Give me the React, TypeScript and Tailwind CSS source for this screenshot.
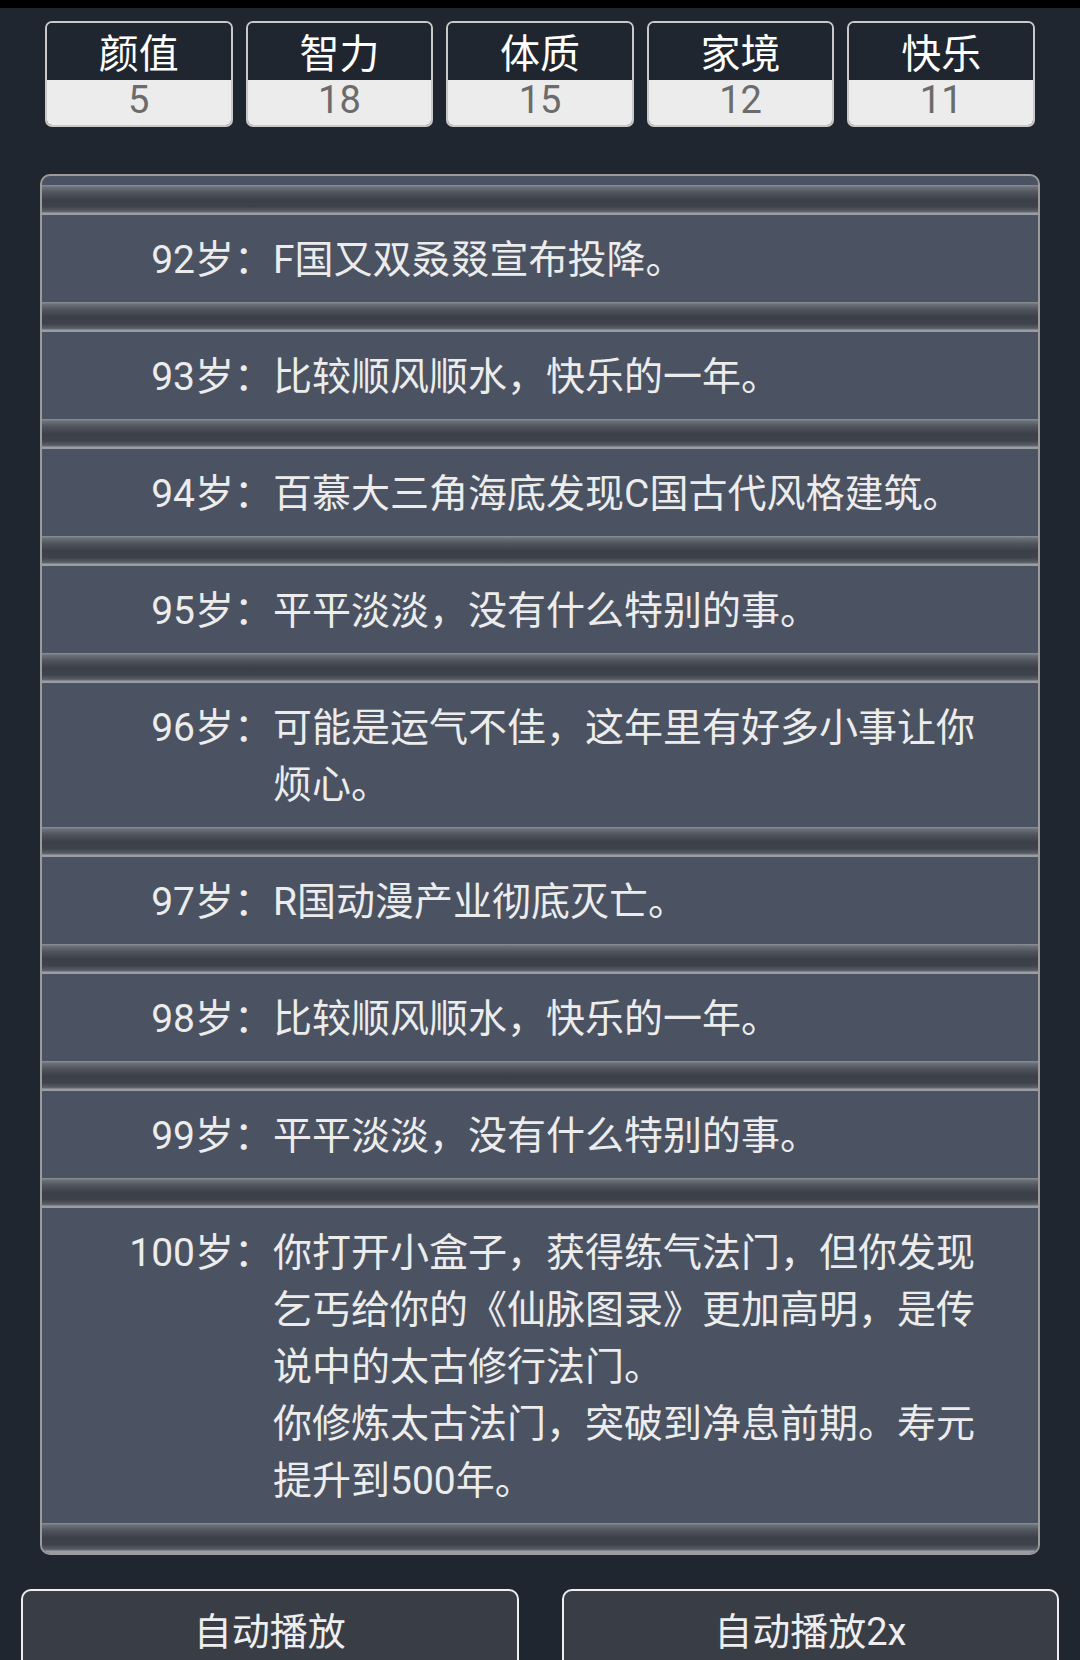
import React from "react";

const stats = [
  { label: "颜值", value: "5" },
  { label: "智力", value: "18" },
  { label: "体质", value: "15" },
  { label: "家境", value: "12" },
  { label: "快乐", value: "11" },
];

const rows: { age: string; lines: string[] }[] = [
  { age: "92岁：", lines: ["F国又双叒叕宣布投降。"] },
  { age: "93岁：", lines: ["比较顺风顺水，快乐的一年。"] },
  { age: "94岁：", lines: ["百慕大三角海底发现C国古代风格建筑。"] },
  { age: "95岁：", lines: ["平平淡淡，没有什么特别的事。"] },
  { age: "96岁：", lines: ["可能是运气不佳，这年里有好多小事让你烦心。"] },
  { age: "97岁：", lines: ["R国动漫产业彻底灭亡。"] },
  { age: "98岁：", lines: ["比较顺风顺水，快乐的一年。"] },
  { age: "99岁：", lines: ["平平淡淡，没有什么特别的事。"] },
  {
    age: "100岁：",
    lines: [
      "你打开小盒子，获得练气法门，但你发现乞丐给你的《仙脉图录》更加高明，是传说中的太古修行法门。",
      "你修炼太古法门，突破到净息前期。寿元提升到500年。",
    ],
  },
];

function Bar() {
  return (
    <div className="h-[30px] shrink-0 bg-[linear-gradient(to_bottom,#8c9097_0%,#6b6f77_8%,#50545d_25%,#3b3f48_50%,#3e424b_72%,#5a5e66_88%,#9a9da3_94%,#9a9da3_100%)]" />
  );
}

export default function App() {
  return (
    <div
      className="w-[1080px] h-[1660px] overflow-hidden bg-[#20262f] flex flex-col"
      style={{ fontFamily: '"Roboto", "Noto Sans CJK SC", sans-serif' }}
    >
      <div className="h-[8px] bg-black shrink-0" />

      <div className="grid grid-cols-5 gap-[13px] px-[45px] mt-[13px] shrink-0">
        {stats.map((s) => (
          <div
            key={s.label}
            className="border-2 border-[#c9c9c9] rounded-[7px] overflow-hidden flex flex-col"
          >
            <div className="h-[57px] bg-[#20262f] text-white text-[40px] leading-[51px] pt-[6px] text-center">
              {s.label}
            </div>
            <div className="h-[45px] bg-[#ececec] text-[#6b6b6b] text-[38px] leading-[38px] pt-[1px] text-center">
              {s.value}
            </div>
          </div>
        ))}
      </div>

      <div className="mx-[40px] mt-[47px] h-[1381px] shrink-0 border-2 border-[#9b9b9b] rounded-[10px] overflow-hidden bg-[#4b5362] flex flex-col">
        <div className="h-[9px] shrink-0" />
        {rows.map((r) => (
          <React.Fragment key={r.age}>
            <Bar />
            <div className="flex pt-[17px] pb-[13px] text-[39px] leading-[57px] text-[#ececec] shrink-0">
              <div className="w-[231px] shrink-0 text-right whitespace-nowrap">{r.age}</div>
              <div className="w-[722px] shrink-0">
                {r.lines.map((l, i) => (
                  <div key={i}>{l}</div>
                ))}
              </div>
            </div>
          </React.Fragment>
        ))}
        <Bar />
      </div>

      <div className="grid grid-cols-2 gap-[43px] px-[21px] mt-[34px] shrink-0">
        <div className="h-[110px] border-2 border-[#eeeeee] rounded-[10px] bg-[#393d46] text-[#eeeeee] text-[38px] leading-[57px] pt-[13px] text-center">
          自动播放
        </div>
        <div className="h-[110px] border-2 border-[#eeeeee] rounded-[10px] bg-[#393d46] text-[#eeeeee] text-[38px] leading-[57px] pt-[13px] text-center">
          自动播放2x
        </div>
      </div>
    </div>
  );
}
